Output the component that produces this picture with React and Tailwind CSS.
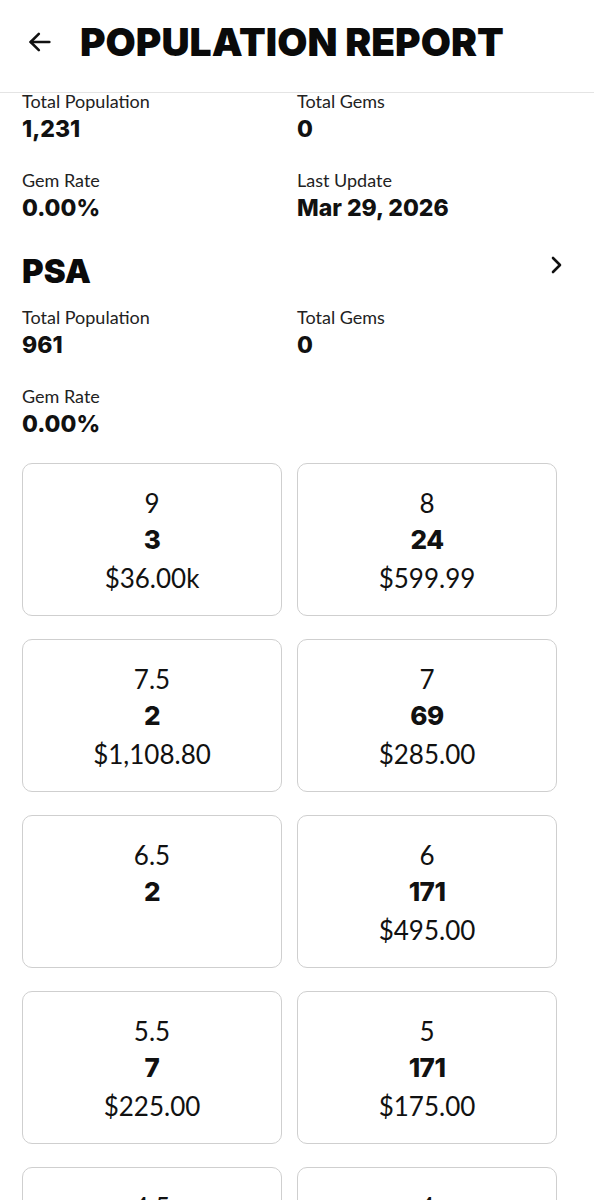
import React from "react";

function Stat({ label, value }) {
  return (
    <div>
      <div className="font-['Lato',sans-serif] text-[18px] leading-[16px] text-[#222]">{label}</div>
      <div className="mt-[4px] font-['Inter',sans-serif] font-extrabold text-[23px] leading-[32px] text-[#111]">{value}</div>
    </div>
  );
}

function StatGrid({ items }) {
  return (
    <div className="grid grid-cols-[260px_260px] gap-x-[15px] gap-y-[27px]">
      {items.map((it, i) => (
        <Stat key={i} label={it[0]} value={it[1]} />
      ))}
    </div>
  );
}

const cards = [
  ["9", "3", "$36.00k"],
  ["8", "24", "$599.99"],
  ["7.5", "2", "$1,108.80"],
  ["7", "69", "$285.00"],
  ["6.5", "2", ""],
  ["6", "171", "$495.00"],
  ["5.5", "7", "$225.00"],
  ["5", "171", "$175.00"],
  ["4.5", "", ""],
  ["4", "", ""],
];

function Card({ grade, count, price }) {
  return (
    <div className="h-[153px] rounded-[10px] border-[1.5px] border-[#cfcfcf] bg-white pt-[21px] flex flex-col items-center text-[#111]">
      <div className="font-['Lato',sans-serif] text-[26px] leading-[36px]">{grade}</div>
      <div className="font-['Inter',sans-serif] font-extrabold text-[26px] leading-[38px] tracking-[-0.5px]">{count}</div>
      <div className="font-['Lato',sans-serif] text-[26px] leading-[38px]">{price}</div>
    </div>
  );
}

export default function App() {
  return (
    <div className="w-[594px] h-[1200px] overflow-hidden bg-white">
      <div className="h-[93px] border-b-[1.5px] border-[#e4e4e4] flex items-center pl-[26px] pb-[8px]">
        <svg width="28" height="28" viewBox="0 0 24 24" fill="none" stroke="#111" strokeWidth="2.2" strokeLinecap="round" strokeLinejoin="round">
          <path d="M20 12H4" />
          <path d="M11 5l-7 7 7 7" />
        </svg>
        <div className="ml-[26px] font-['Inter',sans-serif] font-black text-[39px] leading-[44px] text-[#0a0a0a]">
          POPULATION REPORT
        </div>
      </div>
      <div className="pl-[22px]">
        <StatGrid items={[["Total Population", "1,231"], ["Total Gems", "0"], ["Gem Rate", "0.00%"], ["Last Update", "Mar 29, 2026"]]} />
        <div className="mt-[27px] w-[541px] flex items-center justify-between">
          <div className="font-['Inter',sans-serif] font-black text-[33px] leading-[40px] text-[#0a0a0a]">PSA</div>
          <svg width="14" height="20" viewBox="0 0 14 20" fill="none" stroke="#111" strokeWidth="2.6" strokeLinecap="round" strokeLinejoin="round" className="mb-[12px]">
            <path d="M4 3l7 7-7 7" />
          </svg>
        </div>
        <div className="mt-[18px]">
          <StatGrid items={[["Total Population", "961"], ["Total Gems", "0"], ["Gem Rate", "0.00%"]]} />
        </div>
        <div className="mt-[23px] grid grid-cols-[260px_260px] gap-x-[15px] gap-y-[23px]">
          {cards.map((c, i) => (
            <Card key={i} grade={c[0]} count={c[1]} price={c[2]} />
          ))}
        </div>
      </div>
    </div>
  );
}
